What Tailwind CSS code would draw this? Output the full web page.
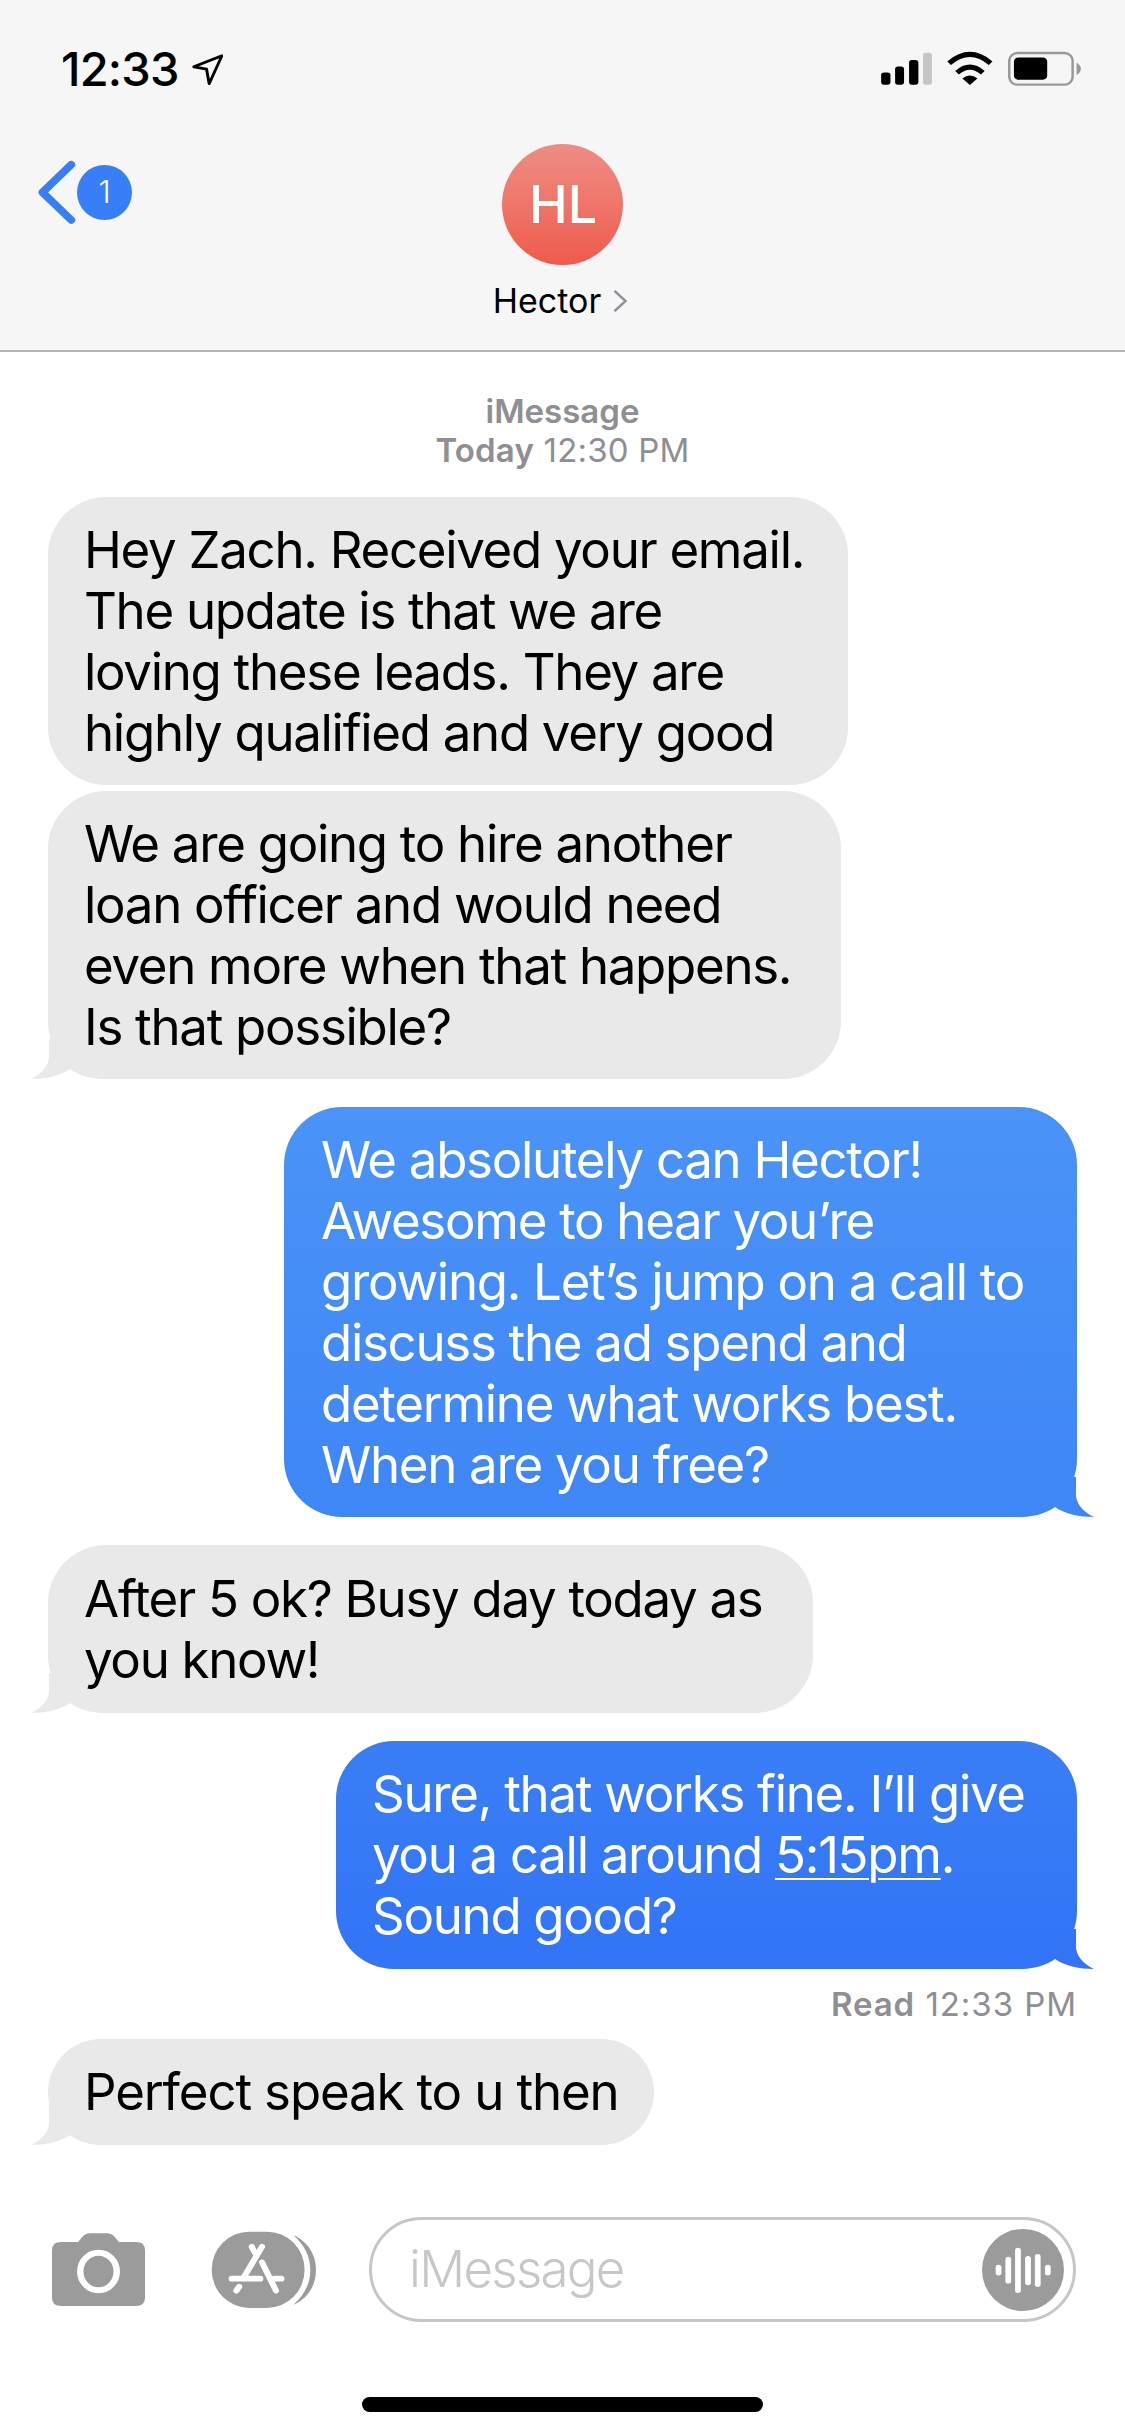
<!DOCTYPE html>
<html lang="en">
<head>
    <meta charset="UTF-8">
    <title>Messages</title>
    <script src="https://cdn.jsdelivr.net/npm/@tailwindcss/browser@4"></script>
</head>
<body class="bg-white">
    <div class="w-[1125px] h-[2436px] flex flex-col overflow-hidden font-[family-name:Inter,sans-serif] text-black">

        <!-- header -->
        <header class="h-[352px] bg-[#f6f6f6] border-b-2 border-[#b4b4b4] flex flex-col shrink-0">
            <div class="flex justify-between items-start h-[144px]">
                <div class="flex items-center pl-[61px] pt-[44px] gap-[13px]">
                    <span class="text-[47px] leading-[50px] font-medium tracking-[-0.8px]">12:33</span>
                    <svg class="w-[31px] h-[31px]" viewBox="530 160 85 92" preserveAspectRatio="none" fill="none" stroke="#000" stroke-width="8" stroke-linejoin="round"><path d="M535 198 L612 165 L577 248 L570 205 Z"/></svg>
                </div>
                <svg class="mt-[50px] mr-[42px] w-[204px] h-[37px]" viewBox="885 150 570 112" preserveAspectRatio="none">
                    <rect x="891" y="218" width="26" height="37" rx="8" fill="#000"/>
                    <rect x="930" y="200" width="25" height="55" rx="8" fill="#000"/>
                    <rect x="969" y="180" width="26" height="75" rx="8" fill="#000"/>
                    <rect x="1008" y="158" width="25" height="97" rx="8" fill="#c5c5c5"/>
                    <path d="M1081 190 Q1139 137 1197 190" fill="none" stroke="#000" stroke-width="15"/>
                    <path d="M1103 219 Q1139 185 1175 219" fill="none" stroke="#000" stroke-width="15"/>
                    <path d="M1139 256 L1118 236 Q1139 218 1160 236 Z" fill="#000"/>
                    <rect x="1249" y="159" width="177" height="96" rx="23" fill="none" stroke="#999" stroke-width="7"/>
                    <rect x="1262" y="173" width="93" height="67" rx="12" fill="#000"/>
                    <path d="M1437 188 Q1449 196 1449 207 Q1449 218 1437 226 Z" fill="#999"/>
                </svg>
            </div>
            <div class="relative flex flex-col items-center">
                <div class="w-[121px] h-[121px] rounded-full bg-linear-to-b from-[#ee8d84] to-[#ee5a4c] flex items-center justify-center text-white text-[52px] font-medium pl-[1px]">HL</div>
                <div class="mt-[16px] pr-[5px] flex items-center gap-[12px] text-[34px] leading-[40px]">
                    <span>Hector</span>
                    <svg class="w-[14px] h-[22px]" viewBox="0 0 14 24" preserveAspectRatio="none" fill="none" stroke="#8a8f99" stroke-width="2.6"><path d="M1.5 1 L12.5 12 L1.5 23"/></svg>
                </div>
                <!-- back button -->
                <div class="absolute left-[36px] top-[16px] flex items-center">
                    <svg class="w-[41px] h-[65px]" viewBox="100 480 114 195" preserveAspectRatio="none" fill="none" stroke="#387ef7" stroke-width="22" stroke-linecap="round" stroke-linejoin="round"><path d="M198 494 L118 577 L198 660"/></svg>
                    <div class="w-[55px] h-[55px] rounded-full bg-[#387ef7] flex items-center justify-center text-white text-[31px] font-light">1</div>
                </div>
            </div>
        </header>

        <!-- thread -->
        <main class="flex-1 flex flex-col px-[48px] text-[51px] leading-[61px] tracking-[-1.3px]">
            <div class="mt-[40px] text-center text-[33px] leading-[39px] text-[#8e8e93] tracking-normal">
                <div class="font-semibold">iMessage</div>
                <div class="tracking-[0.2px]"><span class="font-semibold">Today</span> 12:30 PM</div>
            </div>

            <div class="mt-[27px] w-[800px] bg-[#e9e9e9] rounded-[58px] px-[36px] py-[22px] whitespace-nowrap">Hey Zach. Received your email.<br>The update is that we are<br>loving these leads. They are<br>highly qualified and very good</div>

            <div class="relative mt-[6px] w-[793px] bg-[#e9e9e9] rounded-[58px] px-[36px] py-[22px] whitespace-nowrap">We are going to hire another<br>loan officer and would need<br>even more when that happens.<br>Is that possible?
                <svg class="absolute -z-10 left-[-18px] bottom-0 w-[80px] h-[40px]" viewBox="0 0 80 40"><path class="fill-[#e9e9e9]" d="M19 0 L19 18 C19 26 12 35 1 40 C15 40 30 37 40 30 C50 37 62 40 78 40 L78 0 Z"/></svg>
            </div>

            <div class="relative mt-[28px] self-end w-[793px] bg-linear-to-b from-[#4a93f7] to-[#3f86f6] text-white rounded-[58px] px-[37px] py-[22px] whitespace-nowrap">We absolutely can Hector!<br>Awesome to hear you’re<br>growing. Let’s jump on a call to<br>discuss the ad spend and<br>determine what works best.<br>When are you free?
                <svg class="absolute -z-10 right-[-18px] bottom-0 w-[80px] h-[40px] -scale-x-100" viewBox="0 0 80 40"><path class="fill-[#3f86f6]" d="M19 0 L19 18 C19 26 12 35 1 40 C15 40 30 37 40 30 C50 37 62 40 78 40 L78 0 Z"/></svg>
            </div>

            <div class="relative mt-[28px] w-[765px] bg-[#e9e9e9] rounded-[58px] px-[36px] py-[23px] whitespace-nowrap">After 5 ok? Busy day today as<br>you know!
                <svg class="absolute -z-10 left-[-18px] bottom-0 w-[80px] h-[40px]" viewBox="0 0 80 40"><path class="fill-[#e9e9e9]" d="M19 0 L19 18 C19 26 12 35 1 40 C15 40 30 37 40 30 C50 37 62 40 78 40 L78 0 Z"/></svg>
            </div>

            <div class="relative mt-[28px] self-end w-[741px] bg-linear-to-b from-[#3a7ef6] to-[#3274f5] text-white rounded-[58px] px-[36px] py-[22px] pb-[23px] whitespace-nowrap">Sure, that works fine. I’ll give<br>you a call around <span class="underline decoration-[1.5px] underline-offset-[5px]">5:15pm</span>.<br>Sound good?
                <svg class="absolute -z-10 right-[-18px] bottom-0 w-[80px] h-[40px] -scale-x-100" viewBox="0 0 80 40"><path class="fill-[#3274f5]" d="M19 0 L19 18 C19 26 12 35 1 40 C15 40 30 37 40 30 C50 37 62 40 78 40 L78 0 Z"/></svg>
            </div>

            <div class="mt-[16px] text-right text-[33px] leading-[39px] text-[#8e8e93] tracking-[0.95px]"><span class="font-semibold">Read</span> 12:33 PM</div>

            <div class="relative mt-[15px] w-[606px] bg-[#e9e9e9] rounded-[53px] px-[36px] py-[22px] pb-[23px] whitespace-nowrap tracking-[-1.15px]">Perfect speak to u then
                <svg class="absolute -z-10 left-[-18px] bottom-0 w-[80px] h-[40px]" viewBox="0 0 80 40"><path class="fill-[#e9e9e9]" d="M19 0 L19 18 C19 26 12 35 1 40 C15 40 30 37 40 30 C50 37 62 40 78 40 L78 0 Z"/></svg>
            </div>
        </main>

        <!-- composer -->
        <footer class="shrink-0">
            <div class="flex items-center pl-[52px]">
                <svg class="w-[93px] h-[73px]" viewBox="145 160 260 218" preserveAspectRatio="none">
                    <path fill="#9b9b9b" d="M170 187 L218 187 L232 169 Q239 161 250 161 L300 161 Q311 161 318 169 L332 187 L380 187 Q405 187 405 212 L405 353 Q405 378 380 378 L170 378 Q145 378 145 353 L145 212 Q145 187 170 187 Z"/>
                    <ellipse cx="275" cy="275" rx="51" ry="56" fill="none" stroke="#fff" stroke-width="18"/>
                </svg>
                <svg class="ml-[66px] w-[105px] h-[77px]" viewBox="588 153 294 231" preserveAspectRatio="none">
                    <rect x="590" y="155" width="260" height="229" rx="105" ry="114" fill="#9b9b9b"/>
                    <path fill="#9b9b9b" d="M818 165 C866 188 882 232 882 270 C882 308 866 352 818 375 C850 345 866 310 866 270 C866 230 850 195 818 165 Z"/>
                    <g fill="none" stroke="#fff" stroke-width="17" stroke-linecap="round">
                        <path d="M731 200 L681 290"/>
                        <path d="M667 320 L659 332"/>
                        <path d="M702 200 L712 220"/>
                        <path d="M731 247 L770 332"/>
                        <path d="M646 296 L726 296"/>
                        <path d="M765 296 L785 296"/>
                    </g>
                </svg>
                <div class="ml-[53px] w-[707px] h-[105px] rounded-full border-[3px] border-[#c6c6c6] flex items-center justify-between pl-[37px] pr-[9px]">
                    <span class="text-[51px] text-[#c7c7c7] tracking-[-1.7px] font-light">iMessage</span>
                    <div class="w-[82px] h-[82px] rounded-full bg-[#9b9b9b] flex items-center justify-center">
                        <svg class="w-[82px] h-[82px]" viewBox="1172 147 228 245" preserveAspectRatio="none" fill="none" stroke="#fff" stroke-width="16" stroke-linecap="round">
                            <path d="M1218 262 L1218 278"/>
                            <path d="M1245 238 L1245 302"/>
                            <path d="M1272 211 L1272 330"/>
                            <path d="M1300 236 L1300 307"/>
                            <path d="M1327 230 L1327 312"/>
                            <path d="M1355 262 L1355 278"/>
                        </svg>
                    </div>
                </div>
            </div>
            <div class="mt-[75px] mb-[24px] mx-auto w-[401px] h-[15px] rounded-full bg-black"></div>
        </footer>
    </div>
</body>
</html>
